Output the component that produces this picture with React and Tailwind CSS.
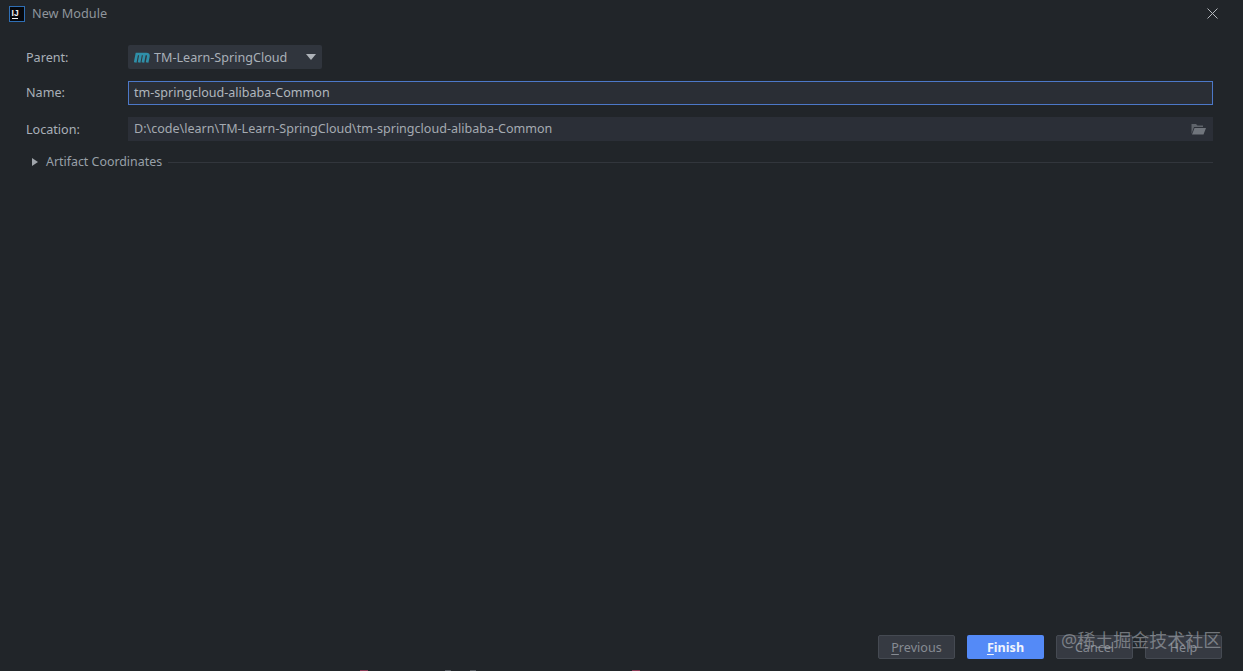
import React from "react";

function Label({ children, nudge }) {
  return <div className={nudge ? "w-[102px] shrink-0 pt-0.5 text-[12.6px] text-[#a9b0b8]" : "w-[102px] shrink-0 text-[12.6px] text-[#a9b0b8]"}>{children}</div>;
}

function Btn({ first, rest, primary }) {
  return (
    <div
      className={
        primary
          ? "flex h-6 w-[77px] items-center justify-center rounded-[2px] bg-[#548af7] pt-0.5 text-[12.6px] font-bold text-[#f0f4fc]"
          : "flex h-6 w-[77px] items-center justify-center rounded-[2px] border border-[#454a52] bg-[#363a42] pt-0.5 text-[12.6px] text-[#868b93]"
      }
    >
      <span className="underline underline-offset-2">{first}</span>
      <span>{rest}</span>
    </div>
  );
}

export default function App() {
  return (
    <div className="relative flex h-[671px] w-[1243px] flex-col overflow-hidden bg-[#212529] font-['Noto_Sans','Open_Sans',sans-serif]">
      {/* title bar */}
      <div className="flex h-[27px] shrink-0 items-center pl-[9px] pr-[25px]">
        <svg width="16" height="16" viewBox="0 0 16 16" className="shrink-0">
          <rect x="0.5" y="0.5" width="15" height="15" fill="#06080c" stroke="#2f6fb5" />
          <text x="2.6" y="9.5" fontSize="8.5" fontWeight="700" fill="#f2f2f2" fontFamily="'Liberation Sans',sans-serif">IJ</text>
          <rect x="3" y="12" width="6" height="1" fill="#f2f2f2" />
        </svg>
        <span className="ml-[7px] text-[12.7px] text-[#8f959c]">New Module</span>
        <svg width="11" height="11" viewBox="0 0 11 11" className="ml-auto">
          <path d="M0.5 0.5 L10.5 10.5 M10.5 0.5 L0.5 10.5" stroke="#b4b8bd" strokeWidth="1" fill="none" />
        </svg>
      </div>

      {/* form */}
      <div className="flex flex-col pl-[26px] pr-[30px] pt-[18px]">
        <div className="flex h-6 items-center">
          <Label nudge>Parent:</Label>
          <div className="flex h-6 w-[194px] items-center rounded-[2px] bg-[#30353d] pl-[6px] pt-0.5 text-[12.6px] text-[#a9b0b8]">
            <svg width="16" height="12" viewBox="0 0 16 12" className="mb-0.5 shrink-0">
              <path d="M1.2 11.5 L2.8 3 H12.4 Q14.8 3 14.3 5.4 L13.1 11.5 M6.6 3.5 L5.1 11.5 M10.4 3.5 L8.9 11.5" stroke="#2f8fa8" strokeWidth="2.7" fill="none" />
            </svg>
            <span className="ml-[4px]">TM-Learn-SpringCloud</span>
            <svg width="10" height="6" viewBox="0 0 10 6" className="mb-0.5 ml-auto mr-[6px]">
              <path d="M0 0 H10 L5 6 Z" fill="#aeb3b9" />
            </svg>
          </div>
        </div>

        <div className="mt-3 flex h-6 items-center">
          <Label>Name:</Label>
          <div className="flex h-6 flex-1 items-center border border-[#4c78c8] bg-[#2a2e35] pl-[5px] text-[12.55px] text-[#b0b6bd]">
            tm-springcloud-alibaba-Common
          </div>
        </div>

        <div className="mt-3 flex h-6 items-center">
          <Label nudge>Location:</Label>
          <div className="flex h-6 flex-1 items-center bg-[#2b2f37] pl-[6px] pr-[7px] text-[12.55px] text-[#a4aab1]">
            <span>D:\code\learn\TM-Learn-SpringCloud\tm-springcloud-alibaba-Common</span>
            <svg width="15" height="12" viewBox="0 0 15 12" className="ml-auto">
              <path d="M0.5 1 H5 L6.5 2.5 H12 V4 H3 L0.5 11 Z" fill="#5f646b" />
              <path d="M3.5 5 H15 L12.5 11.5 H1 Z" fill="#70757c" />
            </svg>
          </div>
        </div>

        <div className="mt-[11px] flex h-[20px] items-center">
          <svg width="6" height="8" viewBox="0 0 6 8" className="ml-[6px] shrink-0">
            <path d="M0 0 L6 4 L0 8 Z" fill="#a0a5ab" />
          </svg>
          <span className="ml-2 text-[12.4px] text-[#98a0a8]">Artifact Coordinates</span>
          <div className="ml-[6px] h-px flex-1 bg-[#32363c]" />
        </div>
      </div>

      {/* footer */}
      <div className="mt-auto flex justify-end gap-3 pb-3 pr-[21px]">
        <Btn first="P" rest="revious" />
        <Btn first="F" rest="inish" primary />
        <Btn first="" rest="Cancel" />
        <Btn first="" rest="Help" />
      </div>

      {/* watermark over the buttons */}
      <div className="absolute left-[1061px] top-[629px] whitespace-nowrap font-['Noto_Sans','Noto_Sans_CJK_SC',sans-serif] text-[18px] leading-[22px] text-[#a8adb3]/60">
        @稀土掘金技术社区
      </div>

      {/* cut-off marks on the lower edge */}
      <div className="absolute left-[360px] top-[670px] h-px w-[8px] bg-[#8a3a55]" />
      <div className="absolute left-[445px] top-[670px] h-px w-[6px] bg-[#555a60]" />
      <div className="absolute left-[470px] top-[670px] h-px w-[6px] bg-[#555a60]" />
      <div className="absolute left-[632px] top-[670px] h-px w-[8px] bg-[#8a3a55]" />
    </div>
  );
}
